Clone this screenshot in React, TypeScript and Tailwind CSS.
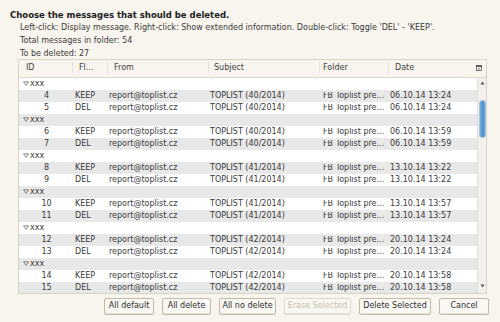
import React from "react";

type Row = { kind: "g" } | { kind: "m"; id: number; flag: string; subj: string; date: string };

const rows: Row[] = [
  { kind: "g" },
  { kind: "m", id: 4, flag: "KEEP", subj: "TOPLIST (40/2014)", date: "06.10.14 13:24" },
  { kind: "m", id: 5, flag: "DEL", subj: "TOPLIST (40/2014)", date: "06.10.14 13:24" },
  { kind: "g" },
  { kind: "m", id: 6, flag: "KEEP", subj: "TOPLIST (40/2014)", date: "06.10.14 13:59" },
  { kind: "m", id: 7, flag: "DEL", subj: "TOPLIST (40/2014)", date: "06.10.14 13:59" },
  { kind: "g" },
  { kind: "m", id: 8, flag: "KEEP", subj: "TOPLIST (41/2014)", date: "13.10.14 13:22" },
  { kind: "m", id: 9, flag: "DEL", subj: "TOPLIST (41/2014)", date: "13.10.14 13:22" },
  { kind: "g" },
  { kind: "m", id: 10, flag: "KEEP", subj: "TOPLIST (41/2014)", date: "13.10.14 13:57" },
  { kind: "m", id: 11, flag: "DEL", subj: "TOPLIST (41/2014)", date: "13.10.14 13:57" },
  { kind: "g" },
  { kind: "m", id: 12, flag: "KEEP", subj: "TOPLIST (42/2014)", date: "20.10.14 13:24" },
  { kind: "m", id: 13, flag: "DEL", subj: "TOPLIST (42/2014)", date: "20.10.14 13:24" },
  { kind: "g" },
  { kind: "m", id: 14, flag: "KEEP", subj: "TOPLIST (42/2014)", date: "20.10.14 13:58" },
  { kind: "m", id: 15, flag: "DEL", subj: "TOPLIST (42/2014)", date: "20.10.14 13:58" },
];

function Tri() {
  return (
    <svg width="6" height="5" viewBox="0 0 6 5" className="shrink-0">
      <path d="M0.5 0.8 H5.5 L3 4.3 Z" fill="none" stroke="#6b6b6b" strokeWidth="0.8" />
    </svg>
  );
}

function Btn({ children, disabled }: { children: React.ReactNode; disabled?: boolean }) {
  return (
    <div
      className={
        "h-[17px] whitespace-nowrap flex items-center justify-center rounded-[2px] border bg-[#f9f7f2] shadow-[inset_0_-1px_0_#e6e1d6] " +
        (disabled ? "border-[#e0dacd] text-[#c5bfb1]" : "border-[#c2baa9] text-[#2e2e2e]")
      }
    >
      {children}
    </div>
  );
}

export default function App() {
  return (
    <div
      className="w-[500px] h-[322px] bg-[#f8f5ee] text-[#3a3a3a] text-[8px] leading-none overflow-hidden whitespace-nowrap"
      style={{ fontFamily: '"DejaVu Sans", sans-serif' }}
    >
      <div className="pl-[10px] pt-[11px] font-bold text-[8.5px] text-[#202020]">
        Choose the messages that should be deleted.
      </div>
      <div className="pl-[20px] pt-[4px]">
        Left-click: Display message. Right-click: Show extended information. Double-click: Toggle 'DEL' - 'KEEP'.
      </div>
      <div className="pl-[20px] pt-[5px]">Total messages in folder: 54</div>
      <div className="pl-[20px] pt-[5px]">To be deleted: 27</div>

      <div className="ml-[18px] mt-[1px] w-[469px] h-[235px] border border-[#d9d3c6] flex flex-col overflow-hidden">
        <div className="h-[18px] shrink-0 flex items-center border-b border-[#ddd8cc] text-[#404040]">
          <div className="w-[53px] pl-[7px]">ID</div>
          <div className="w-[35px] pl-[6px] border-l border-[#e8e3d8] h-[12px] flex items-center">Fl...</div>
          <div className="w-[101px] pl-[6px] border-l border-[#e8e3d8] h-[12px] flex items-center">From</div>
          <div className="w-[111px] pl-[5px] border-l border-[#e8e3d8] h-[12px] flex items-center">Subject</div>
          <div className="w-[69px] pl-[3px] border-l border-[#e8e3d8] h-[12px] flex items-center">Folder</div>
          <div className="w-[83px] pl-[6px] border-l border-[#e8e3d8] h-[12px] flex items-center">Date</div>
          <div className="flex-1 flex items-center justify-center">
            <svg width="6" height="6" viewBox="0 0 6 6">
              <rect x="0.5" y="0.5" width="5" height="5" fill="none" stroke="#555" strokeWidth="0.8" />
              <rect x="0.5" y="0.5" width="5" height="1.5" fill="#555" />
              <path d="M2 3.5 L3 5 L4 3.5 Z" fill="#555" />
            </svg>
          </div>
        </div>
        <div className="flex flex-1 min-h-0">
          <div className="flex-1 flex flex-col bg-white overflow-hidden">
            {rows.map((r, i) => {
              const bg = i % 2 === 0 ? "bg-white" : "bg-[#e8e8e8]";
              if (r.kind === "g") {
                return (
                  <div key={i} className={"h-[12px] shrink-0 flex items-center pl-[4px] gap-[1px] " + bg}>
                    <Tri />
                    <span>xxx</span>
                  </div>
                );
              }
              return (
                <div key={i} className={"h-[12px] shrink-0 flex items-center " + bg}>
                  <div className="w-[53px] text-center pl-[2px]">{r.id}</div>
                  <div className="w-[35px] pl-[3px]">{r.flag}</div>
                  <div className="w-[101px] pl-[2px]">report@toplist.cz</div>
                  <div className="w-[111px] pl-[2px]">{r.subj}</div>
                  <div className="w-[69px] pl-[4px] overflow-hidden">FB Toplist pře...</div>
                  <div className="w-[83px] pl-[2px]">{r.date}</div>
                </div>
              );
            })}
          </div>
          <div className="w-[9px] shrink-0 bg-[#f2f0ec] border-l border-[#e2ded5] flex flex-col items-center">
            <svg width="5" height="4" viewBox="0 0 5 4" className="mt-[3px]">
              <path d="M2.5 0.5 L4.5 3.5 H0.5 Z" fill="#555" />
            </svg>
            <div className="mt-[15px] w-[7px] h-[38px] rounded-[3px] border border-[#aac6dd] bg-[linear-gradient(to_right,#7fb4e0,#4a94d2,#6aa7da)]" />
            <div className="flex-1" />
            <svg width="5" height="4" viewBox="0 0 5 4" className="mb-[5px]">
              <path d="M0.5 0.5 H4.5 L2.5 3.5 Z" fill="#555" />
            </svg>
          </div>
        </div>
      </div>

      <div className="flex justify-end gap-[8px] pr-[11px] mt-[4px]">
        <div className="w-[50px]"><Btn>All default</Btn></div>
        <div className="w-[49px]"><Btn>All delete</Btn></div>
        <div className="w-[57px]"><Btn>All no delete</Btn></div>
        <div className="w-[67px]"><Btn disabled>Erase Selected</Btn></div>
        <div className="w-[72px]"><Btn>Delete Selected</Btn></div>
        <div className="w-[50px]"><Btn>Cancel</Btn></div>
      </div>
    </div>
  );
}
